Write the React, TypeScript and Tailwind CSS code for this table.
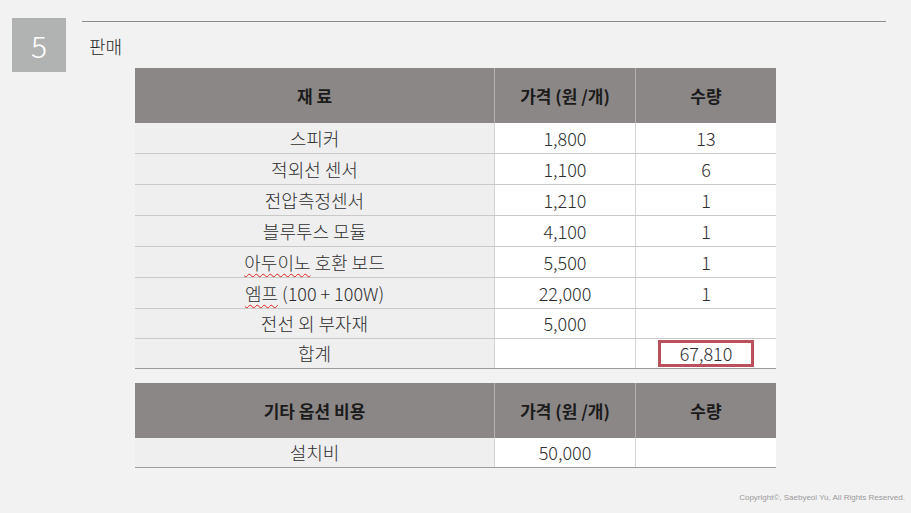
import React from 'react';

const font = { fontFamily: '"Noto Sans CJK KR", "Noto Sans", sans-serif' };

interface Row {
  name: React.ReactNode;
  price: string;
  qty: string;
  h: string;
  boxed?: boolean;
}

const wavy = 'underline decoration-wavy decoration-[#e02020] decoration-1 underline-offset-[3px]';

const rows: Row[] = [
  { name: '스피커', price: '1,800', qty: '13', h: 'h-[31px]' },
  { name: '적외선 센서', price: '1,100', qty: '6', h: 'h-[31px]' },
  { name: '전압측정센서', price: '1,210', qty: '1', h: 'h-[31px]' },
  { name: '블루투스 모듈', price: '4,100', qty: '1', h: 'h-[31px]' },
  {
    name: (
      <span>
        <span className={wavy}>아두이노</span> 호환 보드
      </span>
    ),
    price: '5,500',
    qty: '1',
    h: 'h-[31px]',
  },
  {
    name: (
      <span>
        <span className={wavy}>엠프</span> (100 + 100W)
      </span>
    ),
    price: '22,000',
    qty: '1',
    h: 'h-[31px]',
  },
  { name: '전선 외 부자재', price: '5,000', qty: '', h: 'h-[30px]' },
  { name: '합계', price: '', qty: '67,810', h: 'h-[30px]', boxed: true },
];

const HeaderRow: React.FC<{ title: string }> = ({ title }) => (
  <div className="grid grid-cols-[360px_141px_140px] h-[55px] bg-[#8b8786] text-[17px] font-bold text-[#1b1b1b]">
    <div className="flex items-center justify-center border-r border-[#b5b1b0]">{title}</div>
    <div className="flex items-center justify-center border-r border-[#b5b1b0]">가격 (원 /개)</div>
    <div className="flex items-center justify-center">수량</div>
  </div>
);

const BodyRow: React.FC<{ row: Row; last?: boolean }> = ({ row, last }) => (
  <div
    className={`grid grid-cols-[360px_141px_140px] ${row.h} text-[18px] font-light text-[#2e2e2e] border-b ${
      last ? 'border-[#9c9c9c]' : 'border-[#c9c9c9]'
    }`}
  >
    <div className="flex items-center justify-center bg-[#efefef] border-r border-[#d4d4d4]">{row.name}</div>
    <div className="flex items-center justify-center bg-white border-r border-[#d4d4d4]">{row.price}</div>
    <div className="flex items-center justify-center bg-white">
      {row.boxed ? (
        <div className="w-[96px] h-[27px] border-[3px] border-[#b9505b] flex items-center justify-center">
          {row.qty}
        </div>
      ) : (
        row.qty
      )}
    </div>
  </div>
);

export default function App() {
  return (
    <div className="w-[911px] h-[513px] bg-[#f2f2f2] overflow-hidden" style={font}>
      <div className="flex pl-[12px] pt-[18px]">
        <div className="w-[54px] h-[54px] bg-[#b1b3b3] text-white text-[30px] font-light flex items-center justify-center">
          5
        </div>
        <div className="ml-[16px] mt-[3px] w-[804px] border-t border-[#8e8e8e]">
          <div className="h-[46px] pt-[11px] pl-[7px] text-[18px] font-light leading-[26px] text-[#262626]">판매</div>
          <div className="ml-[53px] w-[641px]">
            <HeaderRow title="재 료" />
            {rows.map((r, i) => (
              <BodyRow key={i} row={r} last={i === rows.length - 1} />
            ))}
            <div className="mt-[14px]">
              <HeaderRow title="기타 옵션 비용" />
              <BodyRow row={{ name: '설치비', price: '50,000', qty: '', h: 'h-[30px]' }} last />
            </div>
          </div>
          <div
            className="flex justify-end -mr-[19px] mt-[24px] text-[8px] text-[#9a9a9a]"
            style={{ fontFamily: '"Liberation Sans", sans-serif' }}
          >
            Copyright©, Saebyeol Yu, All Rights Reserved.
          </div>
        </div>
      </div>
    </div>
  );
}
